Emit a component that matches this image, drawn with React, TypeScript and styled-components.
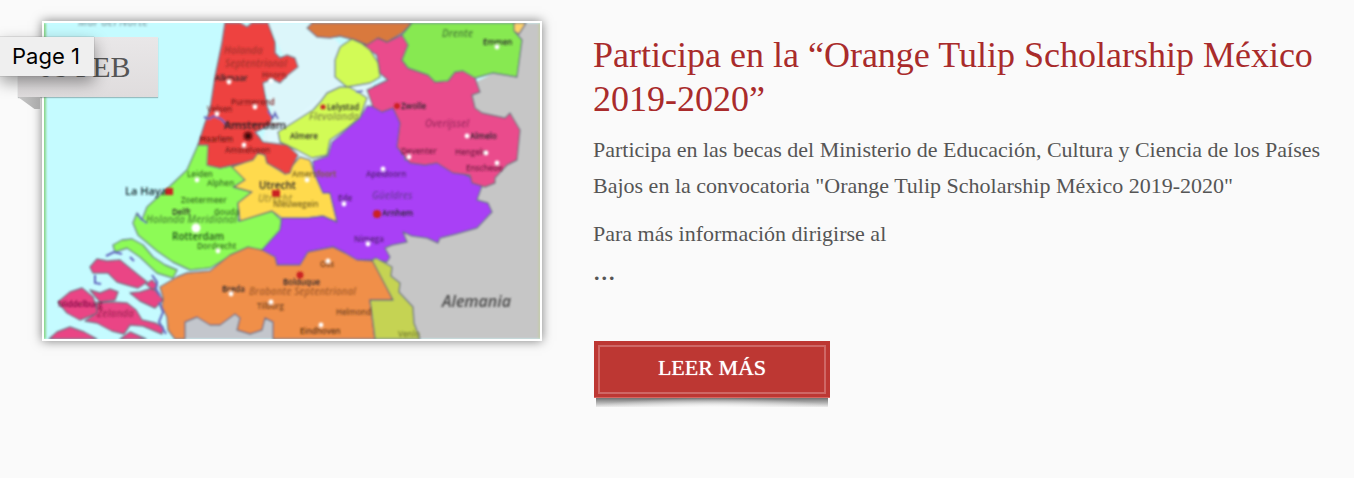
import React from "react";
import styled, { createGlobalStyle } from "styled-components";

const GlobalStyle = createGlobalStyle`
  *, *::before, *::after { box-sizing: border-box; }
  body { margin: 0; background: #fafafa; color: #555; font-family: "Liberation Serif", "Times New Roman", serif; }
`;

const Page = styled.main`
  position: relative;
  padding: 21px 24px 72px 42px;
`;

const Article = styled.article`
  display: grid;
  grid-template-columns: minmax(0, 500fr) minmax(0, 737fr);
  gap: 51px;
  align-items: start;
`;

const Figure = styled.figure`
  position: relative;
  margin: 0;
  border: 2px solid #fff;
  box-shadow: 0 0 10px rgba(0, 0, 0, 0.5);
`;

const MapDrawing = styled.svg`
  display: block;
  width: 100%;
  height: auto;
  font-family: "Open Sans", sans-serif;
`;

const DateRibbon = styled.time`
  position: absolute;
  top: 14px;
  left: -26px;
  width: 140px;
  padding: 0 28px 0 20px;
  text-align: right;
  white-space: nowrap;
  font-size: 30px;
  line-height: 60px;
  color: #555;
  background: linear-gradient(#e9e7e8, #dfdcdd);
  box-shadow: 0 1px 1px rgba(80, 100, 100, 0.4);

  &::after {
    content: "";
    position: absolute;
    top: 100%;
    left: 0;
    width: 22px;
    height: 12px;
    background: linear-gradient(90deg, #c8c8c8, #aaa);
    clip-path: polygon(0 0, 100% 0, 100% 100%, 75% 100%);
  }
`;

const Tooltip = styled.div`
  position: absolute;
  top: 37px;
  left: 0;
  padding: 0 14px 0 12px;
  font: 22px/39px Inter, sans-serif;
  color: #000;
  background: #efefef;
  box-shadow: 0 0 1px #777, 0 6px 16px rgba(0, 0, 0, 0.4);
`;

const Body = styled.div`
  padding-top: 12px;
`;

const Title = styled.h2`
  margin: 0 0 11px;
  font-size: 36px;
  line-height: 44px;
  font-weight: 400;
  color: #a92b2b;
`;

const Text = styled.p`
  margin: 0 0 12px;
  font-size: 22px;
  line-height: 36px;

  &:last-of-type {
    margin-bottom: 0;
  }
`;

const More = styled.div`
  margin: 0 0 53px;
  font-size: 30px;
  line-height: 36px;
`;

const ReadMore = styled.a`
  position: relative;
  display: block;
  width: 236px;
  margin-left: 1px;
  padding-bottom: 3px;
  line-height: 53px;
  text-align: center;
  font-size: 22px;
  color: #fff;
  text-decoration: none;
  text-shadow: 0 0 1px #fff;
  background: #bd3733;
  border-bottom: 1px solid #d86560;

  &::before {
    content: "";
    position: absolute;
    inset: 4px 4px 3px;
    border: 2px solid #cf6765;
  }

  &::after {
    content: "";
    position: absolute;
    top: calc(100% + 1px);
    left: 2px;
    right: 2px;
    height: 9px;
    background:
      radial-gradient(ellipse 52% 110% at 50% 110%, #fafafa, rgba(250, 250, 250, 0)),
      linear-gradient(rgba(0, 0, 0, 0.55), rgba(0, 0, 0, 0.06));
  }
`;

type Region = [fill: string, points: string];

const seaEdge: Region[] = [
  ["#dcf6fa", "268,23 320,23 345,50 340,90 300,125 280,150 262,140 272,110 262,80 290,70"],
  ["#dff8fd", "268,132 282,128 330,88 372,80 372,112 330,160 300,162 268,146"],
  ["#c6c6c6", "510,23 540,23 540,339 410,339 370,250 440,200 460,90 500,70"],
  ["#c3c6cc", "175,339 180,315 220,305 290,310 290,339"],
];

const provinces: Region[] = [
  ["#8dfb56", "198,145 209,145 208,165 220,168 243,163 245,180 233,187 252,192 238,203 238,221 272,211 281,220 280,230 262,250 248,249 230,256 210,268 190,270 173,262 157,251 138,235 133,223 137,213 142,220 147,207 168,188 187,170"],
  ["#8dfb56", "113,245 122,240 132,239 143,245 153,257 165,265 177,270 173,278 157,273 140,257 127,248 115,252"],
  ["#ffda4e", "232,167 243,163 258,153 265,155 267,163 285,174 293,165 300,157 310,160 314,173 323,193 330,193 337,222 323,216 307,218 282,218 272,211 240,221 238,203 252,192 234,187 245,180"],
  ["#a940f6", "382,110 372,106 367,106 360,118 345,131 332,142 328,156 313,161 314,173 323,193 330,193 337,222 323,216 307,218 282,218 280,230 262,250 275,257 277,265 300,265 308,252 333,247 345,253 357,260 377,260 387,262 390,257 385,248 392,245 407,242 403,232 412,236 427,238 438,243 440,238 456,234 477,228 492,212 488,203 477,200 483,183 455,170 435,160 405,160 400,105"],
  ["#ea4b8c", "362,45 378,38 387,42 402,35 408,45 402,60 408,68 428,75 435,82 448,81 455,72 463,71 475,78 480,92 472,95 475,108 482,113 505,118 510,113 520,130 517,160 507,165 495,178 495,183 485,187 472,183 470,175 453,173 437,163 425,165 410,163 397,147 400,123 393,108 382,112 373,107 367,90 388,80 380,73 377,55"],
  ["#d9793e", "307,28 312,23 412,23 402,33 387,42 378,38 367,45 355,40 340,36 330,38 317,37"],
  ["#87e951", "412,23 402,35 408,45 402,60 408,68 428,75 435,82 448,81 455,72 463,71 475,78 493,73 517,77 522,40 515,32 515,23"],
  ["#ffd36a", "514,23 526,23 519,34 514,31"],
  ["#d2fb57", "352,39 340,47 335,60 335,77 347,87 370,83 380,77 378,63 370,50 361,43"],
  ["#d2fb57", "340,87 327,93 321,101 313,110 297,120 278,132 280,142 297,150 312,158 327,155 330,140 347,128 360,117 367,98 358,92 349,87"],
  ["#ee433f", "225,23 222,43 215,77 210,110 205,123 198,145 208,145 207,165 220,168 243,163 253,160 258,153 265,155 267,163 280,170 285,174 290,173 292,167 298,155 287,145 263,142 255,132 270,125 272,118 267,107 263,83 272,79 280,83 288,75 298,67 295,58 287,55 280,58 275,53 275,42 268,23 252,23 247,27 240,23"],
  ["#f08f48", "160,287 177,277 187,273 210,271 220,263 230,255 248,247 262,250 275,257 277,265 300,265 308,252 333,247 345,253 357,260 375,261 393,300 370,300 375,339 273,339 273,322 265,318 262,330 250,334 237,330 240,318 235,314 220,325 210,325 197,317 185,322 185,339 175,339 168,330 167,317 162,307 163,298"],
  ["#c5d353", "372,260 376,258 392,267 391,276 400,283 399,292 413,307 414,323 420,339 375,339 370,300 393,300"],
  ["#ea4585", "90,267 97,259 107,261 120,260 131,269 147,282 138,288 127,285 117,282 108,273 93,273"],
  ["#ea4585", "58,302 70,292 82,288 93,297 98,313 80,320 67,313"],
  ["#ea4585", "90,290 100,293 110,289 118,292 115,300 100,302"],
  ["#ea4585", "97,303 112,302 127,303 136,310 142,320 155,323 163,327 162,334 143,326 130,325 124,334 112,331 97,323 85,321 97,313"],
  ["#ea4585", "130,293 140,292 153,288 163,300 155,308 140,301"],
  ["#ea4585", "146,284 152,280 157,285 153,290"],
  ["#ea4585", "49,339 57,332 70,327 84,332 97,339"],
  ["#ea4585", "120,339 130,332 146,339"],
];

type Label = [text: string, x: number, y: number, size: "s" | "m" | "l", fill?: string, italic?: boolean];

const sizes = { s: 8, m: 10, l: 11 };

const labels: Label[] = [
  ["Mar del Norte", 78, 26, "l", "#8caab0", true],
  ["Holanda", 224, 54, "m", "#a8322e", true],
  ["Septentrional", 225, 67, "m", "#a8322e", true],
  ["Alkmaar", 215, 81, "s"],
  ["Hoorn", 262, 78, "s", "#862523"],
  ["Purmerend", 231, 105, "s", "#7b2020"],
  ["Velsen", 207, 112, "s", "#7b2020"],
  ["Amsterdam", 224, 129, "l"],
  ["Haarlem", 200, 142, "s", "#5f1715"],
  ["Amstelveen", 225, 153, "s", "#7b2020"],
  ["Lelystad", 327, 110, "s"],
  ["Flevolanda", 309, 120, "m", "#899448", true],
  ["Almere", 290, 139, "s"],
  ["Drente", 442, 37, "m", "#4b8137", true],
  ["Emmen", 483, 45, "s"],
  ["Zwolle", 401, 109, "s"],
  ["Overijssel", 425, 127, "m", "#a32c63", true],
  ["Almelo", 470, 139, "s"],
  ["Deventer", 401, 154, "s", "#731e43"],
  ["Hengelo", 455, 155, "s", "#731e43"],
  ["Enschede", 466, 171, "s", "#731e43"],
  ["Apeldoorn", 366, 177, "s", "#542078"],
  ["Güeldres", 372, 199, "m", "#7039a3", true],
  ["Arnhem", 382, 216, "s"],
  ["Ede", 338, 201, "s", "#542078"],
  ["Nimega", 354, 242, "s", "#542078"],
  ["Leiden", 187, 177, "s", "#387024"],
  ["Alphen", 207, 186, "s", "#387024"],
  ["Zoetermeer", 181, 203, "s", "#387024"],
  ["Delft", 172, 215, "s"],
  ["Gouda", 214, 215, "s", "#387024"],
  ["Holanda Meridional", 146, 223, "m", "#4f9138", true],
  ["Dordrecht", 197, 249, "s", "#387024"],
  ["Utrecht", 259, 189, "m"],
  ["Utrecht", 258, 202, "m", "#aa9235", true],
  ["Amersfoort", 292, 177, "s", "#796422"],
  ["Nieuwegein", 273, 207, "s", "#796422"],
  ["Breda", 222, 292, "s"],
  ["Tilburg", 257, 309, "s", "#754522"],
  ["Bolduque", 283, 285, "s"],
  ["Oss", 320, 267, "s", "#754522"],
  ["Brabante Septentrional", 249, 295, "m", "#a65d2b", true],
  ["Helmond", 336, 315, "s", "#754522"],
  ["Eindhoven", 300, 334, "s", "#5b3317"],
  ["Middelburg", 58, 307, "s", "#76133e"],
  ["Zelanda", 97, 317, "m", "#a52558", true],
  ["Venlo", 398, 337, "s", "#767f30"],
];

const towns = [
  [229, 82], [255, 107], [271, 81], [217, 114], [244, 145], [497, 47], [467, 136], [409, 157],
  [486, 153], [497, 163], [383, 169], [344, 204], [368, 244], [197, 180], [218, 251], [231, 294],
  [271, 302], [321, 325], [328, 261], [307, 180],
];

const NetherlandsMap = () => (
  <MapDrawing viewBox="44 23 496 316" role="img" aria-label="Mapa de los Países Bajos">
    <defs>
      <filter id="soft" filterUnits="userSpaceOnUse" x="34" y="13" width="516" height="336">
        <feGaussianBlur stdDeviation="0.8" />
      </filter>
      <filter id="soft-text" filterUnits="userSpaceOnUse" x="34" y="13" width="516" height="336">
        <feGaussianBlur stdDeviation="0.8" />
      </filter>
    </defs>
    <rect x="44" y="23" width="496" height="316" fill="#c5fbff" />
    <g filter="url(#soft)">
      {seaEdge.map(([fill, points]) => (
        <polygon key={points} points={points} fill={fill} />
      ))}
      <g stroke="#5d6478" strokeOpacity="0.8" strokeWidth="1.4" strokeLinejoin="round">
        {provinces.map(([fill, points]) => (
          <polygon key={points} points={points} fill={fill} />
        ))}
      </g>
      <g fill="none" stroke="#6065bd" strokeWidth="2">
        <path d="M204 117l5 2 5-3 7 3 6 6M268 111l5 7 2-5 3 6M356 92l7-1M137 214l4 5 6 4M106 256l8-4 8 2M130 257l4 4M95 275v8l6 1M152 275l5 7-1 7 4 7M159 302l4 10-4 10 7 12" />
      </g>
      <path d="M44 23V339" stroke="#8bd58b" strokeWidth="4" />
      <path d="M540 23V339" stroke="#c5cba5" strokeWidth="3" />
    </g>
    <g filter="url(#soft-text)">
      {labels.map(([text, x, y, size, fill = "#29252b", italic]) => (
        <text
          key={`${text}${y}`}
          x={x}
          y={y}
          fontSize={sizes[size]}
          fontStyle={italic ? "italic" : "normal"}
          fontWeight="600"
          fill={fill}
        >
          {text}
        </text>
      ))}
      <text x="125" y="195" fontSize="11" fontWeight="600" fill="#17292e">La Haya</text>
      <text x="172" y="240" fontSize="10" fontWeight="600" fill="#24551a">Rotterdam</text>
      <text x="442" y="307" fontSize="16" fontWeight="600" fontStyle="italic" fill="#4b4b4b">Alemania</text>
      <path d="M224 124H279" stroke="#572127" strokeWidth="1" />
      {towns.map(([x, y]) => (
        <circle key={`${x}-${y}`} cx={x} cy={y} r="2.4" fill="#fff" />
      ))}
      <circle cx="196" cy="228" r="4.5" fill="#fff" />
      <g fill="#ca2022">
        <rect x="166" y="188" width="7" height="7" />
        <rect x="272" y="190" width="8" height="7" />
        <circle cx="377" cy="214" r="4" />
        <circle cx="300" cy="275" r="3.5" />
        <circle cx="397" cy="106" r="3" />
        <circle cx="323" cy="107" r="2.5" />
      </g>
      <circle cx="248" cy="136" r="5" fill="#8c1b1b" />
      <circle cx="248" cy="136" r="2.5" fill="#290a0a" />
    </g>
  </MapDrawing>
);

export default function App() {
  return (
    <>
      <GlobalStyle />
      <Page>
        <Article>
          <Figure>
            <NetherlandsMap />
            <DateRibbon dateTime="2019-02-08">08 FEB</DateRibbon>
          </Figure>
          <Body>
            <Title>Participa en la “Orange Tulip Scholarship México 2019-2020”</Title>
            <Text>
              Participa en las becas del Ministerio de Educación, Cultura y Ciencia de los Países
              Bajos en la convocatoria "Orange Tulip Scholarship México 2019-2020"
            </Text>
            <Text>Para más información dirigirse al</Text>
            <More>...</More>
            <ReadMore href="#leer-mas">LEER MÁS</ReadMore>
          </Body>
        </Article>
        <Tooltip role="tooltip">Page 1</Tooltip>
      </Page>
    </>
  );
}
